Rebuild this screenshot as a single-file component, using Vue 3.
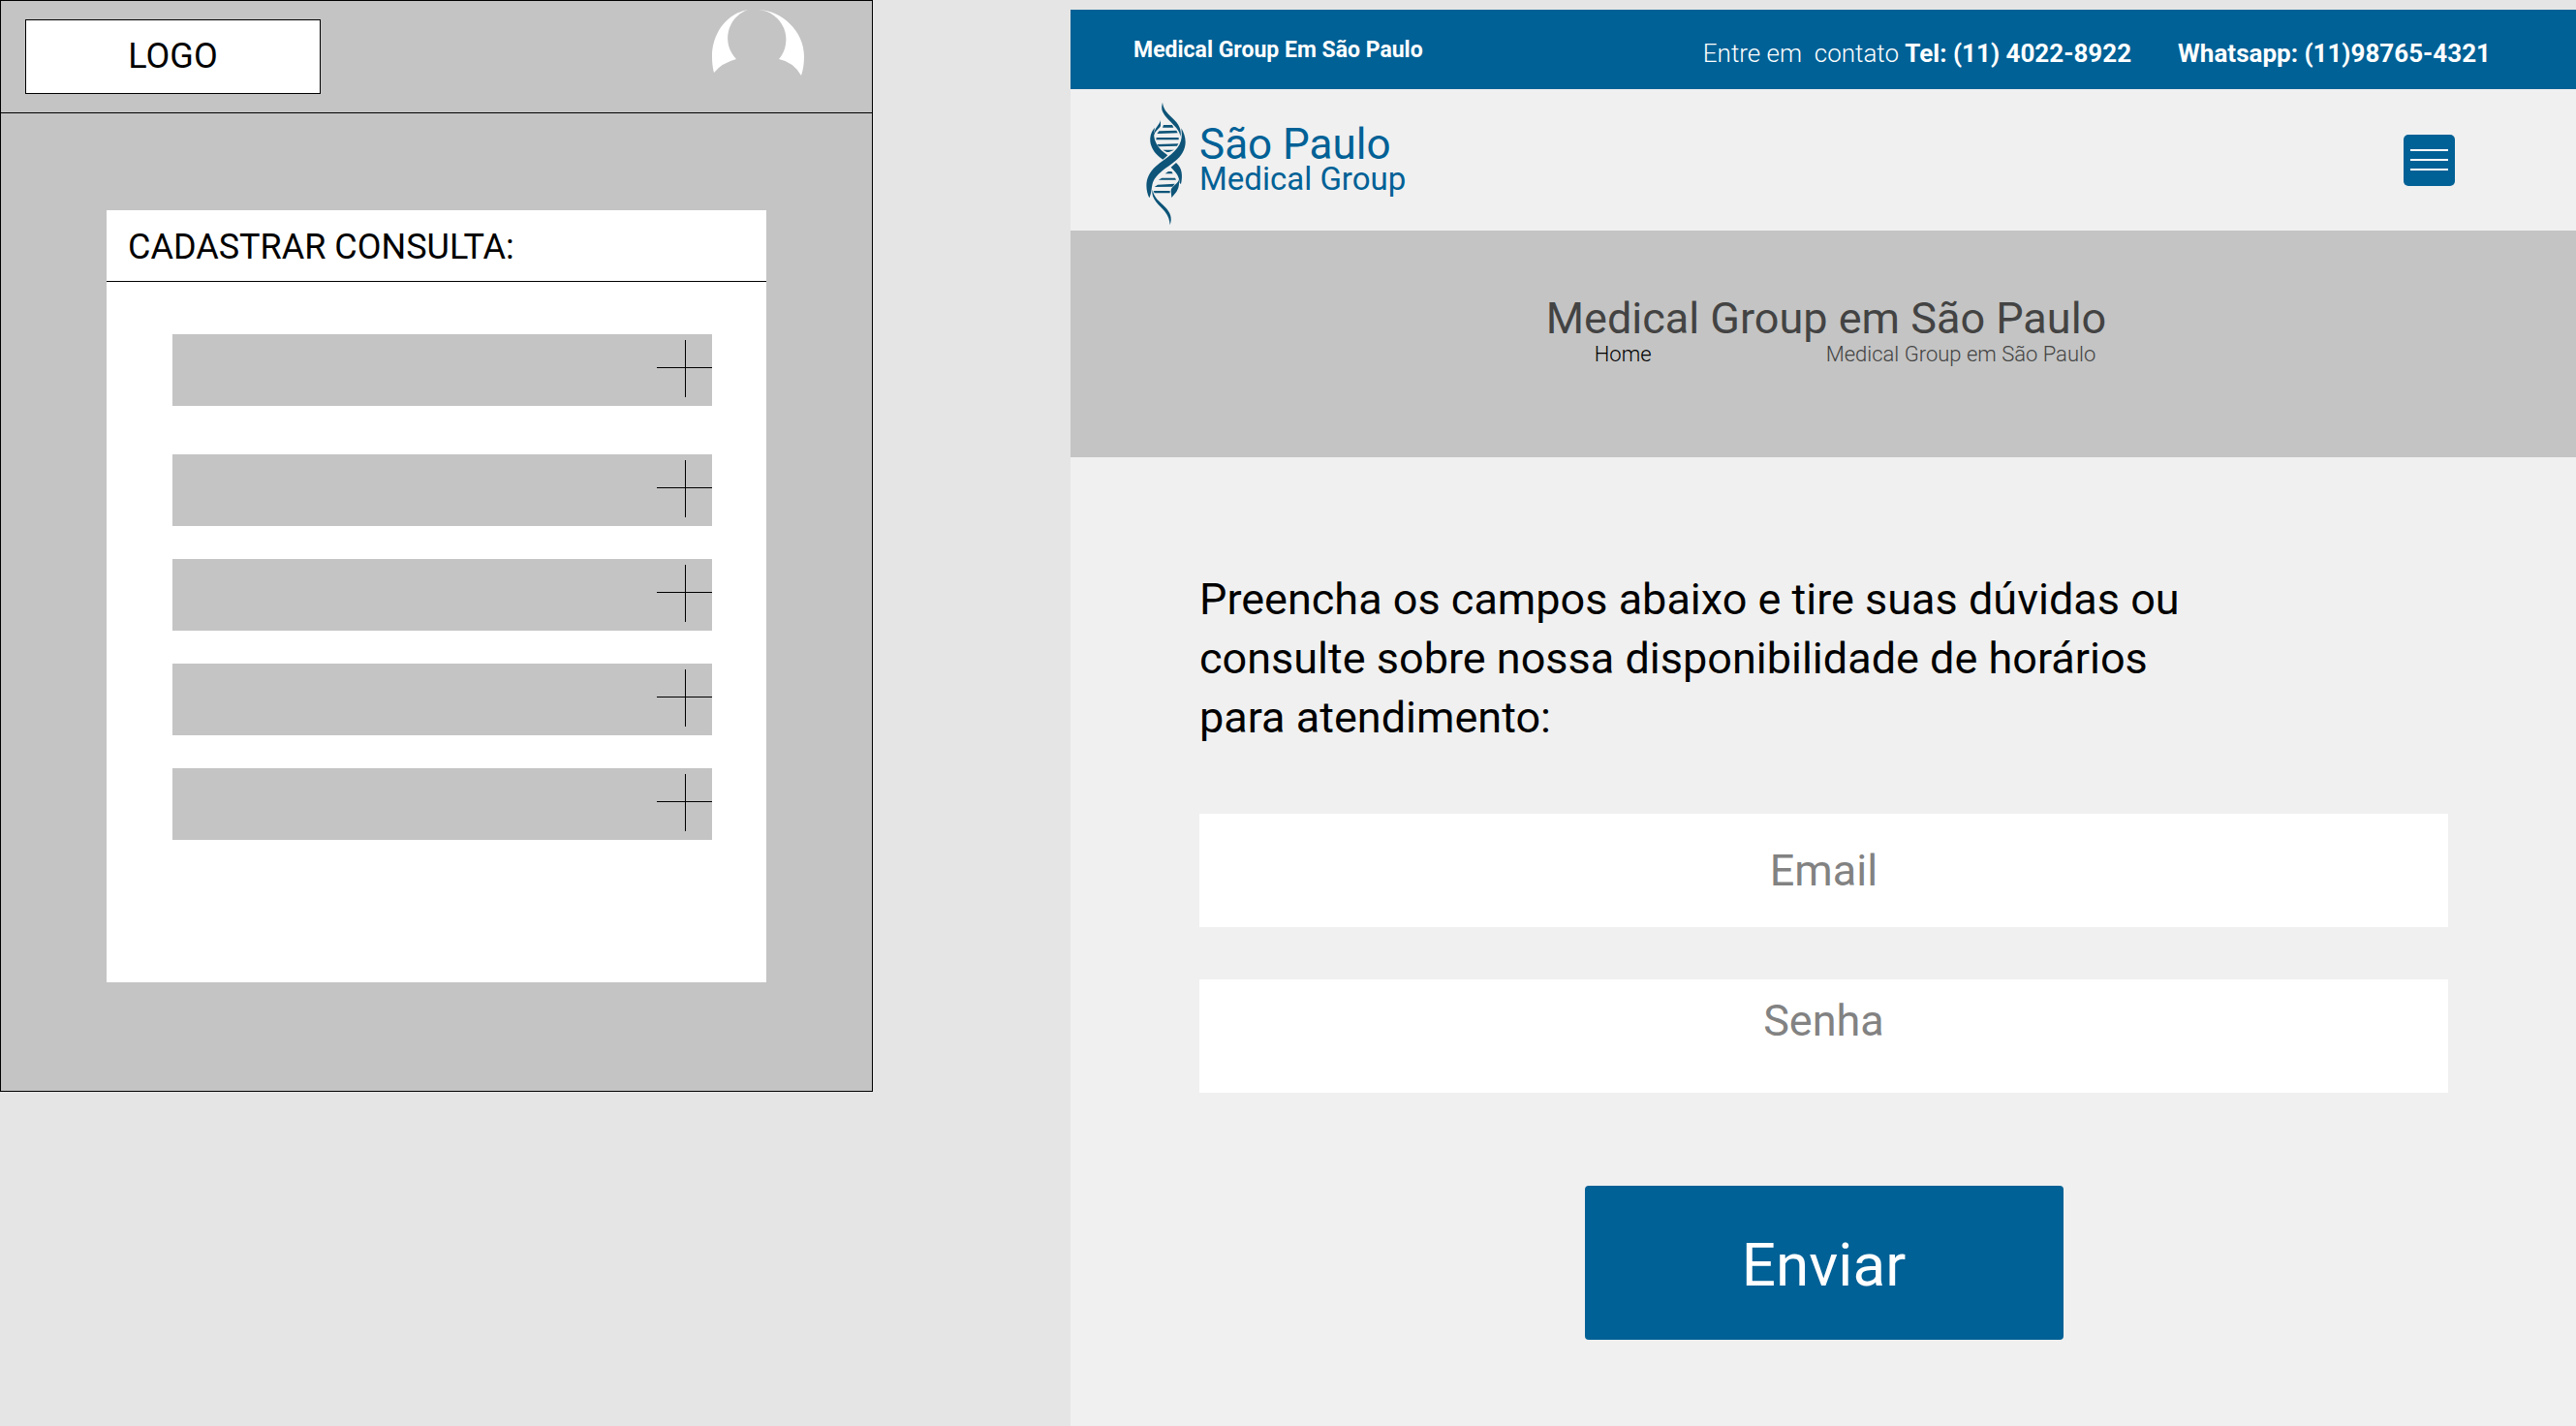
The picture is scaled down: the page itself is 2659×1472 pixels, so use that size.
<script setup>
import { ref } from 'vue'

const slots = [1, 2, 3, 4, 5]
const email = ref('')
const senha = ref('')
</script>

<template>
  <div class="board">
    <section class="wireframe">
      <header class="wire-header">
        <div class="wire-logo">LOGO</div>
        <svg class="avatar" viewBox="0 0 96 96" role="img" aria-label="Perfil">
          <path d="M37 0C12 5 0 28 0 48C0 56 1 61 2 65Q10 55 25 51A31 31 0 0 1 37 0Z" />
          <path d="M48 0C72 1 95 22 95 48C95 56 94 62 92 68Q84 54 69 51A31 31 0 0 0 48 0Z" />
        </svg>
      </header>
      <div class="card">
        <h2 class="card-title">CADASTRAR CONSULTA:</h2>
        <ul class="slots">
          <li v-for="slot in slots" :key="slot" class="slot">
            <button type="button" class="add" :aria-label="`Adicionar item ${slot}`">
              <svg viewBox="0 0 57 59"><path d="M0 28.5H57M29.5 0V59" /></svg>
            </button>
          </li>
        </ul>
      </div>
    </section>

    <main class="site">
      <div class="topbar">
        <strong class="topbar-name">Medical Group Em São Paulo</strong>
        <p class="contact">
          <span class="phone">Entre em&nbsp; contato <strong>Tel: (11) 4022-8922</strong></span>
          <strong>Whatsapp: (11)98765-4321</strong>
        </p>
      </div>

      <header class="site-header">
        <a href="#" class="brand">
          <svg class="helix" viewBox="66 45 129 384" aria-hidden="true">
            <path d="M120 47C114 70 119 79 139 101C158 121 171 130 176 153C179 130 170 113 151 96C131 77 122 66 120 47Z" />
            <path d="M114 101C114 114 92 126 92 153C96 135 111 128 114 120Z" />
            <path d="M96 125C72 152 77 194 121 224L136 211C105 189 86 163 96 125Z" />
            <path d="M178 127C196 157 198 191 166 223C140 248 96 266 88 303C85 318 86 327 79 343C65 313 65 275 99 245C132 218 168 199 177 166C181 151 179 139 178 127Z" />
            <path d="M162 234C181 250 183 275 177 300L173 297C172 274 160 262 146 248Z" />
            <path d="M171 285C169 300 146 307 146 321L148 342C165 324 173 314 171 285Z" />
            <path d="M89 317C82 345 113 367 128 386C138 399 142 411 143 427C151 403 144 388 128 371C110 352 93 343 89 317Z" />
            <path d="M123 117H150L154 125H120ZM109 136L163 134L167 142L103 144ZM101 156H170V163H100ZM103 177L169 175L165 182L108 184ZM121 194H156L140 201H133ZM138 261H148L152 268H128ZM118 281H159L162 287H107ZM105 302L158 299L151 308L95 309ZM92 321H143V328H95Z" />
          </svg>
          <span class="brand-text">
            <span class="brand-city">São Paulo</span>
            <span class="brand-group">Medical Group</span>
          </span>
        </a>
        <button type="button" class="menu" aria-label="Abrir menu">
          <span></span><span></span><span></span>
        </button>
      </header>

      <div class="banner">
        <div class="banner-inner">
          <h1>Medical Group em São Paulo</h1>
          <nav class="crumbs">
            <a href="#">Home</a>
            <span>Medical Group em São Paulo</span>
          </nav>
        </div>
      </div>

      <form class="form" @submit.prevent>
        <p class="intro">
          Preencha os campos abaixo e tire suas dúvidas ou<br />
          consulte sobre nossa disponibilidade de horários<br />
          para atendimento:
        </p>
        <input v-model="email" type="email" class="field" placeholder="Email" aria-label="Email" />
        <input v-model="senha" type="password" class="field field-raised" placeholder="Senha" aria-label="Senha" />
        <button type="submit" class="send">Enviar</button>
      </form>
    </main>
  </div>
</template>

<style>
body {
  margin: 0;
  background: #e5e5e5;
}
</style>

<style scoped>
.board {
  display: grid;
  grid-template-columns: 901fr 1554fr;
  column-gap: 204px;
  align-items: start;
  min-height: 100vh;
  background: #e5e5e5;
  font-family: Roboto, "Liberation Sans", sans-serif;
}

.board * {
  box-sizing: border-box;
}

.wireframe {
  padding-bottom: 112px;
  border: 1px solid #000;
  background: #c4c4c4;
}

.wire-header {
  display: flex;
  justify-content: space-between;
  align-items: flex-start;
  height: 116px;
  padding: 9px 69px 0 25px;
  border-bottom: 1px solid #000;
}

.wire-logo {
  width: 305px;
  height: 77px;
  margin-top: 10px;
  border: 1px solid #000;
  background: #fff;
  font-size: 36px;
  line-height: 74px;
  text-align: center;
}

.avatar {
  width: 96px;
  height: 96px;
  fill: #fff;
}

.card {
  margin: 100px 109px 0;
  padding-bottom: 147px;
  background: #fff;
}

.card-title {
  margin: 0;
  padding: 4px 22px 0;
  border-bottom: 1px solid #000;
  font-size: 36px;
  font-weight: 400;
  line-height: 69px;
}

.slots {
  display: flex;
  flex-direction: column;
  gap: 34px;
  margin: 0;
  padding: 54px 56px 0 68px;
  list-style: none;
}

.slot {
  display: flex;
  justify-content: flex-end;
  height: 74px;
  padding-top: 6px;
  background: #c4c4c4;
}

.slot:first-child {
  margin-bottom: 16px;
}

.add {
  width: 57px;
  height: 59px;
  padding: 0;
  border: 0;
  background: none;
}

.add svg {
  display: block;
  width: 57px;
  height: 59px;
  fill: none;
  stroke: #000;
}

.site {
  min-height: calc(100vh - 10px);
  margin-top: 10px;
  background: #f0f0f0;
}

.topbar {
  display: flex;
  justify-content: space-between;
  align-items: center;
  height: 82px;
  padding: 0 88px 0 65px;
  background: #006196;
  color: #fff;
}

.topbar-name {
  padding-top: 2px;
  font-size: 23px;
  line-height: 32px;
}

.contact {
  display: flex;
  gap: 48px;
  margin: 0;
  padding-top: 8px;
  font-size: 26px;
  font-weight: 300;
  line-height: 32px;
}

.contact strong {
  font-weight: 700;
}

.site-header {
  display: flex;
  justify-content: space-between;
  align-items: center;
  height: 146px;
  padding: 0 125px 0 77px;
}

.brand {
  display: flex;
  align-items: flex-end;
  gap: 13px;
  padding-top: 8px;
  color: #006196;
  text-decoration: none;
}

.helix {
  width: 43px;
  height: 128px;
  fill: #0d5478;
}

.brand-text {
  display: flex;
  flex-direction: column;
  gap: 2px;
  padding-bottom: 32px;
}

.brand-city {
  font-size: 44px;
  line-height: 36px;
}

.brand-group {
  font-size: 33px;
  line-height: 32px;
}

.menu {
  display: flex;
  flex-direction: column;
  justify-content: center;
  gap: 8px;
  width: 53px;
  height: 53px;
  padding: 0 7px;
  border: 0;
  border-radius: 5px;
  background: #006196;
}

.menu span {
  height: 2px;
  background: #fff;
}

.banner {
  display: flex;
  justify-content: center;
  height: 234px;
  padding: 65px 0 0 6px;
  background: #c4c4c4;
}

.banner h1 {
  margin: 0;
  color: #434343;
  font-size: 45px;
  font-weight: 400;
  line-height: 52px;
}

.crumbs {
  display: flex;
  justify-content: space-between;
  padding: 0 11px 0 50px;
  color: #434343;
  font-size: 22px;
  font-weight: 300;
  line-height: 22px;
}

.crumbs a {
  color: #000;
  text-decoration: none;
}

.form {
  display: flex;
  flex-direction: column;
  padding: 116px 132px 88px 133px;
}

.intro {
  margin: 0 0 69px;
  color: #000;
  font-size: 45px;
  line-height: 61px;
}

.field {
  width: 100%;
  height: 117px;
  margin: 0 0 54px;
  padding: 0;
  border: 0;
  background: #fff;
  color: #828282;
  font-family: inherit;
  font-size: 45px;
  text-align: center;
}

.field::placeholder {
  color: #828282;
  opacity: 1;
}

.field-raised {
  margin-bottom: 96px;
  padding-bottom: 32px;
}

.send {
  align-self: center;
  width: 494px;
  height: 159px;
  padding: 4px 0 0;
  border: 0;
  border-radius: 4px;
  background: #006196;
  color: #fff;
  font-family: inherit;
  font-size: 62px;
}
</style>
